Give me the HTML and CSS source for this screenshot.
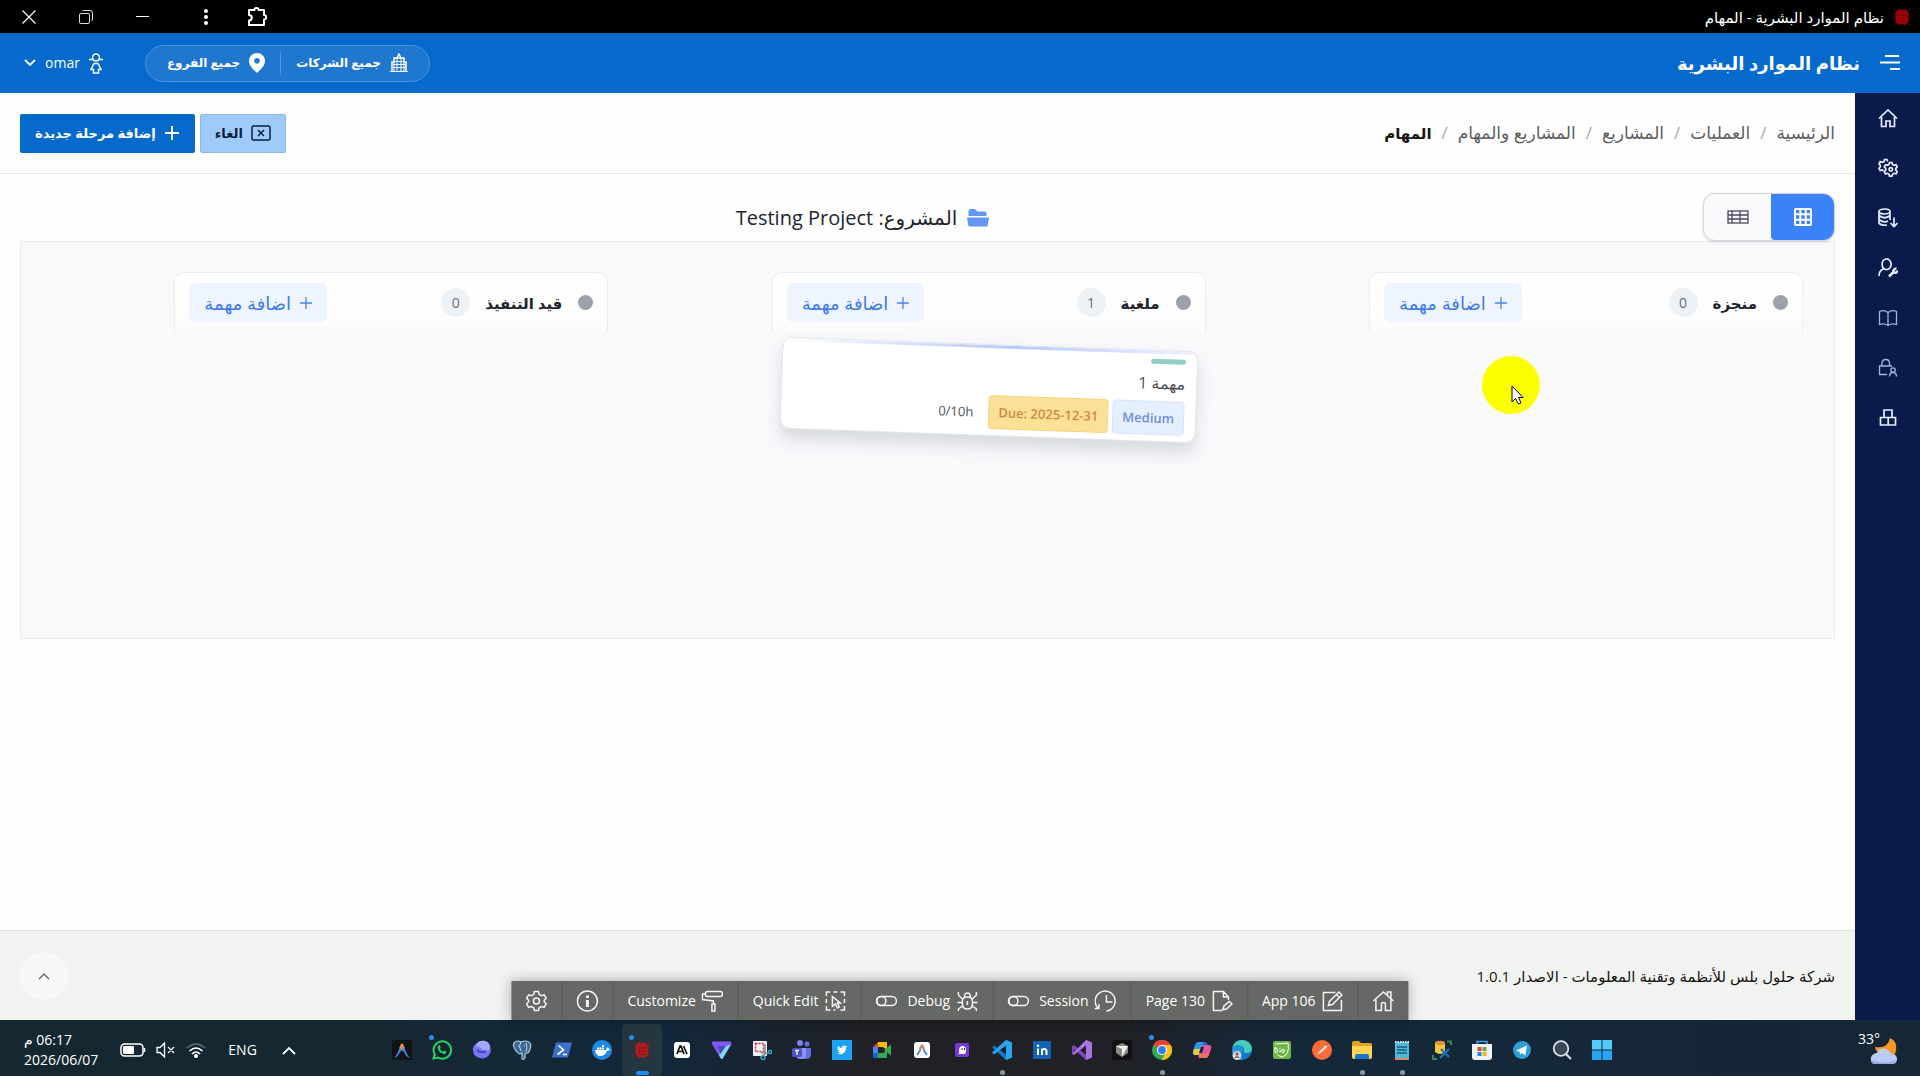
FILE: index.html
```html
<!DOCTYPE html>
<html lang="ar" dir="rtl">
<head>
    <meta charset="UTF-8">
    <meta name="viewport" content="width=device-width, initial-scale=1.0">
    <title>نظام الموارد البشرية - المهام</title>
    <link rel="stylesheet" href="styles.css">
</head>
<body>

    <!-- Window title bar -->
    <div class="titlebar">
        <div class="titlebar-name">
            <svg class="app-mark" viewBox="0 0 20 20"><path d="M5 4l2-2 3 1 3-1 2 2 2 3-1 3 1 3-2 3-2 2-3-1-3 1-3-3-1-3 1-2-1-3z" fill="#a00008"/><path d="M1 1l4 4M19 1l-4 4M1 19l4-4M19 19l-4-4M1 10h3M16 10h3M6 8h8M6 11h8M7 14h6M8 5h5" stroke="#6b0006"/></svg>
            <span>نظام الموارد البشرية - المهام</span>
        </div>
        <div class="window-controls">
            <button class="win-btn ext" aria-label="Extensions"><svg width="20" height="20" viewBox="0 0 20 20"><path d="M2 3h5.500a2 2 0 0 1 4 0H17v5a2 2 0 0 1 0 4.500V18H2v-4.500a2.500 2.500 0 0 0 0-5.500z" fill="none" stroke="#fff" stroke-width="2" stroke-linejoin="round"/></svg></button>
            <button class="win-btn more" aria-label="More"><svg width="4" height="16" viewBox="0 0 4 16" fill="#fff"><circle cx="2" cy="2" r="2"/><circle cx="2" cy="8" r="2"/><circle cx="2" cy="14" r="2"/></svg></button>
            <button class="win-btn" aria-label="Minimize"><svg width="14" height="14" viewBox="0 0 14 14"><path d="M0 6.500h13" stroke="#fff"/></svg></button>
            <button class="win-btn" aria-label="Restore"><svg width="14" height="14" viewBox="0 0 14 14" fill="none" stroke="#ddd"><rect x=".5" y="3.500" width="10" height="10" rx="1.500"/><path d="M3 1.500q.5-1 2-1h6q2.500 0 2.500 2.500v6q0 1.500-1 2"/></svg></button>
            <button class="win-btn" aria-label="Close"><svg width="14" height="14" viewBox="0 0 14 14"><path d="M.5.5l13 13M13.500.5l-13 13" stroke="#fff" stroke-width="1.200"/></svg></button>
        </div>
    </div>

    <header class="header">
        <div class="brand">
            <button class="menu-btn" aria-label="القائمة"><svg width="20" height="16" viewBox="0 0 20 16" stroke="#fff" stroke-width="2"><path d="M5 1h14M0 7.500h20M10 14h10"/></svg></button>
            <a class="brand-name" href="#">نظام الموارد البشرية</a>
        </div>
        <div class="header-tools">
            <div class="scope-pill">
                <button class="scope"><svg width="18" height="20" viewBox="0 0 18 20"><path d="M2 18V9h2V5h10v4h2v9M7 5l2-4 2 4" fill="none" stroke="#fff" stroke-width="1.500"/><path d="M0 18.500h18M7 5v13M11 5v13M4 9v9M14 9v9M4 8.500h10M3 11.500h12M3 14.500h12" stroke="#fff"/></svg><span>جميع الشركات</span></button>
                <button class="scope"><svg width="16" height="20" viewBox="0 0 16 20"><path fill="#fff" fill-rule="evenodd" d="M8 0a8 8 0 0 1 8 8c0 5-5 9-8 12C5 17 0 13 0 8a8 8 0 0 1 8-8zm0 5a2.800 2.800 0 1 0 0 5.600A2.800 2.800 0 0 0 8 5z"/></svg><span>جميع الفروع</span></button>
            </div>
            <button class="user-btn">
                <svg width="14" height="21" viewBox="0 0 14 21" fill="none" stroke="#fff" stroke-width="1.500"><circle cx="7" cy="4.500" r="3.500"/><path d="M0 6.500h4M10 6.500h4M5 10.500h4l3 6H9.500V20h-5v-3.500H2z"/></svg>
                <span>omar</span>
                <svg width="12" height="8" viewBox="0 0 12 8"><path d="M1 1l5 5 5-5" fill="none" stroke="#fff" stroke-width="1.800"/></svg>
            </button>
        </div>
    </header>

    <div class="shell">
        <nav class="rail" aria-label="القائمة الرئيسية">
            <a href="#" aria-label="الرئيسية"><svg viewBox="0 0 20 20"><path d="M1 10.500L10 2l9 8.500M3.500 9v9.500H8V13h4v5.500h4.500V9"/></svg></a>
            <a href="#" aria-label="الإعدادات"><svg viewBox="0 0 20 20"><path d="M9.500 3.500l-.5-2H6.500L6 3.500l-2 .8-1.800-.8L1 5.800l1.300 1.500v1.500L1 10.500l1.200 2 2-.5 1.300.8"/><path d="M11 6.500l.5-2H14l.5 2 1.500.8 2-.6 1.200 2.200-1.400 1.500v1.800l1.400 1.500-1.200 2.200-2-.6-1.500.9-.5 2h-2.500l-.5-2-1.500-.9-2 .6-1.200-2.200 1.400-1.500v-1.800L6.300 8.900l1.200-2.200 2 .6z"/><circle cx="12.800" cy="11.300" r="1.700"/></svg></a>
            <a href="#" aria-label="البيانات"><svg viewBox="0 0 20 20"><ellipse cx="6.500" cy="3.500" rx="5.500" ry="2.500"/><path d="M1 3.500V15q1.500 2.500 8 2.200M12 3.500V12M1 7.500q5.500 4.500 11 0M1 11.500q5 4 9 1.500M16 9.500v9M12.500 15l3.500 3.500 3.500-3.500"/></svg></a>
            <a href="#" aria-label="المستخدمون"><svg viewBox="0 0 20 20"><path d="M8 1a4.500 5.300 0 1 1 0 10.500A4.500 5.300 0 0 1 8 1zM5.500 11Q1 12.500 1 18"/><path d="M11 18.500l5-5M15.500 14.500a3 3 0 0 1 3-4M15.500 14.500a3 3 0 0 0 4.300-2" stroke-width="2.500"/></svg></a>
            <a class="dim" href="#" aria-label="الدليل"><svg viewBox="0 0 20 20"><path d="M10 4.500Q6 1.500 1.500 3.500V16.500Q6 15 10 17.500 14 15 18.500 16.500V3.500Q14 1.500 10 4.500zM10 4.500v13"/></svg></a>
            <a class="dim" href="#" aria-label="الصلاحيات"><svg viewBox="0 0 20 20"><path d="M9 16.500H1.500V8H14M4 8V5q0-3.500 3.700-3.500T11.500 5v3"/><circle cx="15" cy="12" r="2.200"/><path d="M11.500 18.500q.2-4 3.500-4t3.500 4"/></svg></a>
            <a href="#" aria-label="الوحدات"><svg viewBox="0 0 20 20"><path d="M6 2h8v7.500H6zM2.500 9.500h7.700V17H2.500zM10.200 9.500h7.300V17h-7.300z"/></svg></a>
        </nav>

        <div class="page">
            <div class="page-head">
                <nav class="breadcrumb" aria-label="مسار التنقل">
                    <a href="#">الرئيسية</a><span class="sep">/</span>
                    <a href="#">العمليات</a><span class="sep">/</span>
                    <a href="#">المشاريع</a><span class="sep">/</span>
                    <a href="#">المشاريع والمهام</a><span class="sep">/</span>
                    <h1>المهام</h1>
                </nav>
                <div class="page-actions">
                    <button class="btn btn-cancel"><svg width="20" height="16" viewBox="0 0 20 16" fill="none" stroke="#0a1f3c" stroke-width="1.500"><rect x="1" y="1" width="18" height="14" rx="1.500"/><path d="M7 5l6 6M13 5l-6 6"/></svg><span>الغاء</span></button>
                    <button class="btn btn-primary"><svg width="16" height="16" viewBox="0 0 16 16"><path d="M8 1v14M1 8h14" stroke="#fff" stroke-width="2"/></svg><span>إضافة مرحلة جديدة</span></button>
                </div>
            </div>

            <main class="content">
                <div class="board-head">
                    <div class="view-toggle">
                        <button class="active" aria-label="عرض البطاقات" aria-pressed="true"><svg width="18" height="18" viewBox="0 0 18 18" fill="none" stroke="#fff" stroke-width="2"><rect x="1" y="1" width="16" height="16" rx="1"/><path d="M1 6.300h16M1 11.700h16M6.300 1v16M11.700 1v16"/></svg></button>
                        <button aria-label="عرض الجدول" aria-pressed="false"><svg width="22" height="14" viewBox="0 0 22 14" fill="none" stroke="#4a4763" stroke-width="1.300"><rect x="1" y="1" width="20" height="12"/><path d="M1 5h20M1 9h20M5 1v12M13 1v12"/></svg></button>
                    </div>
                    <h2 class="project-title">
                        <svg width="22" height="18" viewBox="0 0 22 18" fill="#6297f3"><path d="M1.500 7V2q0-2 2-2H8l2.500 2.500h7q2 0 2 2V7z"/><path d="M0 8.500h22l-1.200 7.500q-.3 1.500-1.800 1.500H3q-1.500 0-1.800-1.500z"/></svg>
                        <span>المشروع: Testing Project</span>
                    </h2>
                </div>

                <div class="board">
                    <section class="column">
                        <div class="column-head">
                            <span class="dot"></span>
                            <h3>منجزة</h3>
                            <span class="count">0</span>
                            <button class="add-task"><svg width="12" height="12" viewBox="0 0 12 12"><path d="M6 0v12M0 6h12" stroke="#4b82ea" stroke-width="1.300"/></svg><span>اضافة مهمة</span></button>
                        </div>
                    </section>
                    <section class="column">
                        <div class="column-head">
                            <span class="dot"></span>
                            <h3>ملغية</h3>
                            <span class="count">1</span>
                            <button class="add-task"><svg width="12" height="12" viewBox="0 0 12 12"><path d="M6 0v12M0 6h12" stroke="#4b82ea" stroke-width="1.300"/></svg><span>اضافة مهمة</span></button>
                        </div>
                        <article class="task dragging">
                            <span class="task-tag"></span>
                            <h4>مهمة 1</h4>
                            <div class="task-meta">
                                <span class="badge badge-priority">Medium</span>
                                <span class="badge badge-due" dir="ltr">Due: 2025-12-31</span>
                                <span class="hours" dir="ltr">0/10h</span>
                            </div>
                        </article>
                    </section>
                    <section class="column">
                        <div class="column-head">
                            <span class="dot"></span>
                            <h3>قيد التنفيذ</h3>
                            <span class="count">0</span>
                            <button class="add-task"><svg width="12" height="12" viewBox="0 0 12 12"><path d="M6 0v12M0 6h12" stroke="#4b82ea" stroke-width="1.300"/></svg><span>اضافة مهمة</span></button>
                        </div>
                    </section>
                </div>
            </main>

            <footer class="footer">
                <span>شركة حلول بلس للأنظمة وتقنية المعلومات - الاصدار 1.0.1</span>
                <a class="to-top" href="#" aria-label="إلى الأعلى"><svg width="12" height="8" viewBox="0 0 12 8"><path d="M1 7l5-5 5 5" fill="none" stroke="#555" stroke-width="1.200"/></svg></a>
            </footer>
        </div>
    </div>

    <!-- Developer toolbar -->
    <div class="dev-bar">
        <button aria-label="Home"><svg viewBox="0 0 22 22"><path d="M1 11L11 2l10 9M3.500 9.500V20.500H9V14q0-1.500 2-1.500t2 1.500v6.500h5.500V9.500M15 5V2h3.500v6"/></svg></button>
        <button><svg viewBox="0 0 22 22"><path d="M14 2.500H2v18h18V10"/><path d="M7 15.500l1-4 9.500-9.500 3 3-9.500 9.500zM15 4.500l3 3"/></svg><span>App 106</span></button>
        <button><svg viewBox="0 0 22 22"><path d="M11 20.500H2v-19h10l5 5.500v3M12 1.500V7h5M11.500 19.500l1-3.500 5.500-4.500 2.500 2.500-5.500 5z"/></svg><span>Page 130</span></button>
        <button><svg viewBox="0 0 22 22"><path d="M3.500 18A10 10 0 1 1 12 21M12 5v7h6M0 18.500h4.500V14"/></svg><span>Session</span><svg class="switch" viewBox="0 0 22 22"><rect x="1" y="6.500" width="20" height="9" rx="4.500"/><circle cx="6" cy="11" r="4.500"/></svg></button>
        <button><svg viewBox="0 0 22 22"><path d="M6 11q0-4 5-4t5 4v3q0 5-5 5t-5-5zM8 7q0-4 3-4t3 4M11 11v4M2 2v3l4 4M20 2v3l-4 4M1 12.500h5M16 12.500h5M2 21v-2l4-3M20 21v-2l-4-3"/></svg><span>Debug</span><svg class="switch" viewBox="0 0 22 22"><rect x="1" y="6.500" width="20" height="9" rx="4.500"/><circle cx="6" cy="11" r="4.500"/></svg></button>
        <button><svg viewBox="0 0 22 22"><path d="M2 6V2h4M9 2h4M16 2h4v4M20 9v4M20 16v4h-4M2 9v4M2 16v4h4M9 20h2"/><path d="M8 6.500v10l3-2.500 2 4 2-1-2-4h3z"/></svg><span>Quick Edit</span></button>
        <button><svg viewBox="0 0 22 22"><rect x="4" y="1.500" width="17" height="5" rx="2"/><path d="M4 4H1v5.500l11 1.500v3M10.500 14h3v7h-3z"/></svg><span>Customize</span></button>
        <button aria-label="Info"><svg viewBox="0 0 22 22"><circle cx="11" cy="11" r="10"/><path d="M11 10v7M11 5.500V8" stroke-width="3"/></svg></button>
        <button aria-label="Settings"><svg viewBox="0 0 22 22"><path d="M9 1.500h4l.7 2.800 2.300 1.300 2.800-.8 2 3.500-2 2v1.500l2 2-2 3.500-2.800-.8-2.300 1.300L13 20.500H9l-.7-2.700L6 16.500l-2.800.8-2-3.500 2-2v-1.500l-2-2 2-3.500 2.800.8 2.300-1.300z"/><circle cx="11" cy="11" r="3"/></svg></button>
    </div>

    <!-- Desktop taskbar -->
    <div class="taskbar" dir="ltr">
        <div class="tray">
            <div class="clock" dir="rtl"><span>06:17 م</span><span dir="ltr">2026/06/07</span></div>
            <div class="status">
                <svg width="26" height="14" viewBox="0 0 26 14"><rect x="1" y="1" width="22" height="12" rx="3.500" fill="none" stroke="#fff" stroke-width="1.500"/><rect x="3" y="3" width="11" height="8" rx="1" fill="#fff"/><path d="M24.500 5v4" stroke="#fff" stroke-width="1.500"/></svg>
                <svg width="20" height="16" viewBox="0 0 20 16" fill="none" stroke="#fff" stroke-width="1.300"><path d="M1 5.500h3L8.500 1v14L4 10.500H1zM12 5l6 6M18 5l-6 6"/></svg>
                <svg width="20" height="15" viewBox="0 0 20 15" fill="none" stroke="#fff" stroke-width="1.500"><path d="M1 5q9-8 18 0" stroke="#60707b"/><path d="M3.500 8q6.500-6 13 0M6 11q4-4 8 0"/><circle cx="10" cy="13" r="1.300" fill="#fff"/></svg>
            </div>
            <span class="lang">ENG</span>
            <svg width="14" height="9" viewBox="0 0 14 9"><path d="M1 8l6-6 6 6" fill="none" stroke="#fff" stroke-width="1.800"/></svg>
        </div>

        <div class="apps">
            <a class="app" href="#" aria-label="Antigravity"><svg viewBox="0 0 20 20"><path d="M0 0h20v20H0z" fill="#101416"/><path d="M2 18Q6 14 8 6q2-5 4 0 2 8 6 12-4-1-6-6-2-3-4 0-2 5-6 6z" fill="#4a86e8"/><path d="M7.500 8Q10-1 12.500 8l-2.500 1z" fill="#ef8a3c"/></svg></a>
            <a class="app notice" href="#" aria-label="WhatsApp"><svg viewBox="0 0 20 20"><path d="M1.500 18.500l1.300-4.200A8.700 8.700 0 1 1 6 17.500z" fill="#15252f" stroke="#25d366" stroke-width="2"/><path d="M6.500 5.500q1-1 1.500.3l.7 1.700-1 1.300q1 2.200 3.300 3l1.200-1.300 2.300 1q-.1 2.500-2.500 2.500Q7 13 5.800 8.500 5.500 6.500 6.500 5.500z" fill="#25d366"/></svg></a>
            <a class="app" href="#" aria-label="Assistant"><svg viewBox="0 0 20 20"><path d="M5 3q3-3 8-2 4 1 5 5 2 5-1 9-4 5-9 3-6-1-7-7-1-5 4-8z" fill="#7776f0"/><path d="M5 3q3-3 8-2 4 1 5 5l-1 4q-4 2-7-1-4-3-6-2z" fill="#a5a6ff"/><path d="M5 10q4 4 9 1" stroke="#3f37b8" stroke-width="1.500" fill="none"/></svg></a>
            <a class="app" href="#" aria-label="PostgreSQL"><svg viewBox="0 0 20 20"><path d="M3 2q3-2 6 0 4-2 8 0 3 2 1 7-1 4-3 4l-2 1v4q-1 2-3 1V13q-3 2-5-1Q-1 5 3 2z" fill="#386a94" stroke="#b5c6d3" stroke-width="1.200"/><path d="M9 2Q6 6 9 11M14 3q2 4 0 9M6 6h1M12 6h1" fill="none" stroke="#c6d4de"/></svg></a>
            <a class="app" href="#" aria-label="PowerShell"><svg viewBox="0 0 20 20"><path d="M4 2.500h16L16 17.500H0z" fill="#3b6fce"/><path d="M6.500 5.500l5 4.500-6 4.500M11 14.500h4" stroke="#fff" stroke-width="1.600" fill="none"/></svg></a>
            <a class="app" href="#" aria-label="Docker"><svg viewBox="0 0 20 20"><circle cx="10" cy="10" r="10" fill="#1d8be6"/><path d="M3 10h11q1-1 1-3 2 1 2 2 1 0 1 1l-3 1q-2 5-7 5-4 0-5-6zM5 7.500h2V9.500H5zM7.500 7.500h2V9.500h-2zM10 7.500h2V9.500h-2zM10 5h2v2h-2z" fill="#fff"/></svg></a>
            <a class="app notice current" href="#" aria-label="نظام الموارد البشرية"><svg viewBox="0 0 20 20"><path d="M5 4l2-2 3 1 3-1 2 2 2 3-1 3 1 3-2 3-2 2-3-1-3 1-3-3-1-3 1-2-1-3z" fill="#ad1d22"/><path d="M1 1l4 4M19 1l-4 4M1 19l4-4M19 19l-4-4M1 10h3M16 10h3M6 8h8M6 11h8M7 14h6" stroke="#7f1519"/></svg></a>
            <a class="app" href="#" aria-label="Anthropic"><svg viewBox="0 0 20 20"><rect x="2" y="2" width="16" height="16" rx="3" fill="#fff"/><path d="M5 14l3-8h1l3 8M6 11.500h5M11.500 6l3.500 8" stroke="#111" stroke-width="1.700" fill="none"/></svg></a>
            <a class="app" href="#" aria-label="Proton VPN"><svg viewBox="0 0 20 20"><path d="M1 1.500h17q2 1 1 3L11 18q-1 2-2.500 0L0 4q-1-2 1-2.500z" fill="#8458ff"/><path d="M19 4.500L11 18q-1 2-2.500 0L7 15l7-9z" fill="#7fdbe8"/><path d="M5 6h9L8.500 14z" fill="#4c4bb0"/></svg></a>
            <a class="app" href="#" aria-label="Snipping Tool"><svg viewBox="0 0 20 20"><rect x="1" y="1" width="14" height="15" rx="1" fill="#f4f5f7"/><rect x="3.500" y="3.500" width="8" height="8" fill="none" stroke="#d5343a" stroke-width="1.500" stroke-dasharray="2 1"/><path d="M13 4v10l-2 2M9 13h8" stroke="#888" stroke-width="1.500" fill="none"/><circle cx="11" cy="17.500" r="2" fill="none" stroke="#35b4d4" stroke-width="1.300"/><circle cx="18" cy="12" r="1.600" fill="none" stroke="#35b4d4" stroke-width="1.300"/></svg></a>
            <a class="app" href="#" aria-label="Teams"><svg viewBox="0 0 20 20"><circle cx="8" cy="3" r="3" fill="#7b83eb"/><circle cx="15" cy="4" r="2.500" fill="#6670dc"/><path d="M11 8h8v6q0 5-5 5h-3z" fill="#6670dc"/><path d="M4 8h10v7q0 4-5 4t-5-4z" fill="#8d94ff"/><rect x="0" y="8" width="10" height="9" rx="1.500" fill="#4b53bc"/><path d="M3 10.500h4M5 10.500V15" stroke="#fff" stroke-width="1.300"/></svg></a>
            <a class="app" href="#" aria-label="Twitter"><svg viewBox="0 0 20 20"><path d="M0 0h20v20H0z" fill="#1da1f2"/><path d="M5 13.500q2 0 3-.9-1.500-.2-2-1.600h1Q5.300 10.300 5.500 8.500l.9.200Q5 7.300 6 6q2 2 4 2-.2-2.500 2-2.500 1 0 1.500.6l1.300-.4-.7 1.100 1-.2-1 1Q14 13 9.500 14.200 7 14.500 5 13.500z" fill="#fff"/></svg></a>
            <a class="app" href="#" aria-label="Google Meet"><svg viewBox="0 0 20 20"><path d="M1 7l5-5v5z" fill="#ea4335"/><path d="M6 2h8q1 0 1 1v7l-4-3H6z" fill="#fbbc04"/><path d="M1 7h5v6H1z" fill="#4285f4"/><path d="M1 13h5v5H2q-1 0-1-1z" fill="#1967d2"/><path d="M6 13h5l4-3v7q0 1-1 1H6zM12 10l7-5.500v11z" fill="#34a853"/></svg></a>
            <a class="app" href="#" aria-label="Antigravity IDE"><svg viewBox="0 0 20 20"><rect x="2" y="2" width="16" height="16" rx="3" fill="#fff"/><path d="M5 15q3-3 4-8 1-2 2 0 1 5 4 8" fill="none" stroke="#4a86e8" stroke-width="1.800"/><path d="M8 9q2-8 4 0" fill="none" stroke="#ef8a3c" stroke-width="1.500"/></svg></a>
            <a class="app" href="#" aria-label="Ghost"><svg viewBox="0 0 20 20"><rect x="3" y="3" width="14" height="14" rx="2" fill="#7437d8"/><path d="M6.500 14q1-1 .5-3 0-5 3.500-5t3.500 4-2 4z" fill="#fff"/><path d="M10 8v2M12.500 8v2" stroke="#333"/></svg></a>
            <a class="app running" href="#" aria-label="VS Code"><svg viewBox="0 0 20 20"><path d="M14 0l6 2.500v15L14 20 0 7.500 2 5.500l12 9z" fill="#1976c4"/><path d="M14 0l6 2.500v15L14 20V5.500L2 14.500l-2-2z" fill="#2aa5ee"/></svg></a>
            <a class="app" href="#" aria-label="LinkedIn"><svg viewBox="0 0 20 20"><rect x="1" y="1" width="18" height="18" rx="1" fill="#1463b3"/><path d="M6 8.500V15M10 15V8.500M10 11.500q0-2.500 2.300-2.500t2.200 2.500V15" stroke="#fff" stroke-width="2" fill="none"/><circle cx="6" cy="5.800" r="1.200" fill="#fff"/></svg></a>
            <a class="app" href="#" aria-label="Visual Studio"><svg viewBox="0 0 20 20"><path d="M14 0l6 2.500v15L14 20 2 9.500v5L0 14V6l2-1 12 10z" fill="#7d45b8"/><path d="M14 0l6 2.500v15L14 20V5.500L2 15l-2-1z" fill="#a974de"/></svg></a>
            <a class="app" href="#" aria-label="Cursor"><svg viewBox="0 0 20 20"><rect x="0" y="0" width="20" height="20" rx="3" fill="#111"/><path d="M4 6l6-3 6 3v7l-6 4-6-4z" fill="#888"/><path d="M4 6h12l-6 11V9z" fill="#eee"/></svg></a>
            <a class="app running notice" href="#" aria-label="Chrome"><svg viewBox="0 0 20 20"><circle cx="10" cy="10" r="10" fill="#34a853"/><path d="M10 10L1.300 5A10 10 0 0 1 18.700 5z" fill="#ea4335"/><path d="M10 20l4.500-10L10 5h8.700A10 10 0 0 1 10 20z" fill="#fbc116"/><circle cx="10" cy="10" r="5" fill="#fff"/><circle cx="10" cy="10" r="3.900" fill="#2f7cf0"/></svg></a>
            <a class="app" href="#" aria-label="Copilot"><svg viewBox="0 0 20 20"><path d="M6 2h6q2 0 1.500 2L11 13q-.5 2-3 2H3q-3 0-2-4l2-6q1-3 3-3z" fill="#2b9be8"/><path d="M2 9h9l-1 4q-1 2-3 2H3q-3 0-1-6z" fill="#e6cc3c"/><path d="M12 5h5q3 0 2 4l-2 6q-1 3-3 3H8q-2 0-1.500-2L9 7q.5-2 3-2z" fill="#e0589d"/><path d="M12 2q3 0 4 3h-4q-2 0-2 2z" fill="#2c61d8"/><path d="M7 14h10q-1 4-3 4H8q-2 0-1-4z" fill="#f07350"/><path d="M9 7h3l-2 6H7z" fill="#16263a"/></svg></a>
            <a class="app" href="#" aria-label="Edge"><svg viewBox="0 0 20 20"><circle cx="10" cy="10" r="10" fill="#1476c9"/><path d="M.5 8Q2 0 10 0t10 8q0 5-6 5-3 0-2-2 1-5-4-5.500T.5 8z" fill="#44cdb9"/><path d="M0 10q2-6 7-5 5 1 4 6-3 0-3 4 0 3 4 5Q1 21 0 10z" fill="#2196dd"/><circle cx="5" cy="15.500" r="4.500" fill="#d7dce0"/><circle cx="5" cy="14" r="1.700" fill="#8c6464"/><path d="M2 18q3-4 6 0" fill="#777"/></svg></a>
            <a class="app" href="#" aria-label="Bio"><svg viewBox="0 0 20 20"><rect x="1" y="1" width="18" height="18" rx="2" fill="#6db545"/><path d="M3 4q7 0 13-1 2 12-6 14-4-1-5-3" fill="none" stroke="#fff"/><path d="M3 7.500v5h2q1.500-1.300 0-2.500 1.200-1.500-2-2.500M8 9.500v3M8 7.500v1" fill="none" stroke="#fff"/><circle cx="11" cy="11" r="1.500" fill="none" stroke="#fff"/></svg></a>
            <a class="app" href="#" aria-label="Postman"><svg viewBox="0 0 20 20"><circle cx="10" cy="10" r="10" fill="#ff6c37"/><path d="M5 15l2-3 6-6q2-1 2 1L9 12.500z" fill="#fff"/></svg></a>
            <a class="app running" href="#" aria-label="File Explorer"><svg viewBox="0 0 20 20"><path d="M0 3q0-2 2-2h5l2 2h10q1 0 1 2v4H0z" fill="#dea21b"/><path d="M0 6h20v11q0 2-2 2H2q-2 0-2-2z" fill="#ffd354"/><path d="M3 16q0-2 2-2h10q2 0 2 2v3H3z" fill="#1b74cf"/></svg></a>
            <a class="app running" href="#" aria-label="Notepad"><svg viewBox="0 0 20 20"><rect x="3" y="2" width="14" height="17" fill="#4cb8dc"/><path d="M3 19h14" stroke="#d78d57" stroke-width="2"/><path d="M5 7h10M5 10h10M5 13h10" stroke="#1c5b77" stroke-width="1.300"/><path d="M3 2h14" stroke="#d7f2fb" stroke-width="2" stroke-dasharray="1.500 1"/></svg></a>
            <a class="app" href="#" aria-label="SQL Server"><svg viewBox="0 0 20 20"><path d="M3 3v9q5 4 10 0V3z" fill="#f4c73c"/><ellipse cx="8" cy="3" rx="5" ry="2.200" fill="#e8913b"/><path d="M15 1.500h4V5M1 15v4h4" stroke="#3f8458" stroke-width="2" fill="none"/><path d="M9 9l8 8M17 9l-9 9" stroke="#2272b8" stroke-width="2.200"/></svg></a>
            <a class="app" href="#" aria-label="Microsoft Store"><svg viewBox="0 0 20 20"><path d="M5 5V1.500h10V5" fill="none" stroke="#42a8e8" stroke-width="1.500"/><path d="M0 4h20v13q0 3-3 3H3q-3 0-3-3z" fill="#eef2f6"/><path d="M5.500 7h4v4h-4z" fill="#d84f2f"/><path d="M10.500 7h4v4h-4z" fill="#75a832"/><path d="M5.500 12h4v4h-4z" fill="#2788d0"/><path d="M10.500 12h4v4h-4z" fill="#edb526"/></svg></a>
            <a class="app" href="#" aria-label="Telegram"><svg viewBox="0 0 20 20"><circle cx="10" cy="10" r="9" fill="#2c9fd7"/><path d="M4 10.500l11-5-1.700 10-3.500-2.500-2 1.800V12z" fill="#fff"/></svg></a>
            <a class="app" href="#" aria-label="Search"><svg viewBox="0 0 20 20"><circle cx="9" cy="8.500" r="7.300" fill="#3b4a56" stroke="#dbe2e8" stroke-width="1.800"/><path d="M14 14l5 5" stroke="#dbe2e8" stroke-width="2.200"/></svg></a>
            <a class="app" href="#" aria-label="Start"><svg viewBox="0 0 20 20"><path d="M0 0h9.500v9.500H0zM10.500 0H20v9.500h-9.500z" fill="#55caff"/><path d="M0 10.500h9.500V20H0zM10.500 10.500H20V20h-9.500z" fill="#28a5f5"/></svg></a>
        </div>

        <div class="weather">
            <svg width="34" height="34" viewBox="0 0 34 34"><path d="M24 5q9 4 5 16-5 6-12 2-7-3-8-9 13 2 15-9z" fill="#f39a26"/><path d="M8 31a5.500 5.500 0 0 1 0-10q1-1 3-1 4-7 11-3 3 2 3 4 6 0 6 5t-5 5z" fill="#bccbf3"/><path d="M5 27q13 5 25 0-1 4-4 4H8q-3-1-3-4z" fill="#98aae4"/></svg>
            <span class="temp">33°</span>
        </div>
    </div>

    <!-- Mouse pointer highlight -->
    <div class="pointer" dir="ltr"><svg width="14" height="20" viewBox="0 0 14 20"><path d="M1 1v16l3.500-3.500L7.500 19l2.500-1-2.500-5.500H12z" fill="#fff" stroke="#000"/></svg></div>

</body>
</html>
```
FILE: styles.css
```css
* {
    box-sizing: border-box;
}
body {
    margin: 0;
    min-height: 100vh;
    display: flex;
    flex-direction: column;
    position: relative;
    font-family: "Open Sans", "DejaVu Sans", sans-serif;
    font-size: 14px;
    line-height: 20px;
    color: #161513;
    background: #fdfefd;
}
button {
    font: inherit;
    color: inherit;
    background: none;
    border: none;
    padding: 0;
    cursor: pointer;
}
a {
    color: inherit;
    text-decoration: none;
}
h1, h2, h3, h4 {
    margin: 0;
}
svg {
    display: block;
    flex: none;
}

/* Title bar */
.titlebar {
    height: 33px;
    padding: 0 8px 0 0;
    display: flex;
    align-items: center;
    justify-content: space-between;
    background: #000;
    color: #fff;
}
.titlebar-name {
    display: flex;
    align-items: center;
    gap: 8px;
    font-size: 15px;
}
.app-mark {
    width: 20px;
    height: 20px;
}
.window-controls {
    display: flex;
}
.win-btn {
    width: 57px;
    height: 33px;
    display: flex;
    align-items: center;
    justify-content: center;
}
.win-btn.more {
    width: 70px;
}
.win-btn.ext {
    width: 32px;
}

/* Header */
.header {
    height: 60px;
    padding: 0 20px;
    display: flex;
    align-items: center;
    justify-content: space-between;
    background: #056acb;
    color: #fff;
}
.brand {
    display: flex;
    align-items: center;
    gap: 20px;
}
.brand-name {
    font-size: 18px;
    font-weight: bold;
}
.header-tools {
    display: flex;
    align-items: center;
    gap: 38px;
}
.scope-pill {
    display: flex;
    height: 37px;
    padding: 6px;
    border: 1px solid #4a93de;
    border-radius: 19px;
    background: #2077cf;
}
.scope {
    display: flex;
    align-items: center;
    gap: 9px;
    padding: 0 15px;
    font-size: 12px;
    font-weight: bold;
}
.scope + .scope {
    border-right: 1px solid #4a93de;
}
.user-btn {
    display: flex;
    align-items: center;
    gap: 9px;
    padding: 0 4px;
}

/* Layout */
.shell {
    flex: 1;
    display: flex;
}
.rail {
    width: 65px;
    display: flex;
    flex-direction: column;
    background: #0a1b4b;
}
.rail a {
    height: 50px;
    display: flex;
    align-items: center;
    justify-content: center;
}
.rail svg {
    width: 20px;
    height: 20px;
    fill: none;
    stroke: #e6edff;
    stroke-width: 1.7;
}
.rail .dim svg {
    stroke: #a7b3dc;
    stroke-width: 1.3;
}
.page {
    flex: 1;
    min-width: 0;
    display: flex;
    flex-direction: column;
}
.page-head {
    height: 81px;
    padding: 0 20px;
    display: flex;
    align-items: center;
    justify-content: space-between;
    border-bottom: 1px solid #e6e7e8;
}
.breadcrumb {
    display: flex;
    align-items: center;
    gap: 10px;
    font-size: 17px;
    color: #5d5d5d;
}
.breadcrumb .sep {
    color: #aaa;
}
.breadcrumb h1 {
    font-size: 15px;
    color: #161513;
}
.page-actions {
    display: flex;
    gap: 5px;
}
.btn {
    height: 39px;
    padding: 0 14px;
    display: flex;
    align-items: center;
    gap: 8px;
    border-radius: 2px;
    font-size: 13px;
    font-weight: bold;
}
.btn-cancel {
    border: 1px solid #88b8e8;
    background: #9fcbfb;
    color: #0a1f3c;
}
.btn-primary {
    padding: 0 15px;
    background: #056acb;
    color: #fff;
}

/* Board */
.content {
    flex: 1;
    padding: 19px 20px 0;
}
.board-head {
    display: grid;
    grid-template-columns: 1fr auto 1fr;
    align-items: center;
}
.view-toggle {
    justify-self: start;
    display: flex;
    height: 48px;
    border: 1px solid #d3d6da;
    border-radius: 12px;
    overflow: hidden;
    background: #f9fafb;
    box-shadow: 0 1px 3px rgba(0, 0, 0, 0.15);
}
.view-toggle button {
    width: 67px;
    display: flex;
    align-items: center;
    justify-content: center;
}
.view-toggle .active {
    width: 63px;
    background: #3b82f6;
    border-radius: 0 0 4px 4px;
}
.project-title {
    grid-column: 2;
    display: flex;
    align-items: center;
    gap: 10px;
    margin-right: 130px;
    padding-top: 2px;
    font-size: 20px;
    font-weight: 500;
    color: #22252b;
}
.board {
    min-height: 398px;
    padding: 30px 31px;
    display: grid;
    grid-template-columns: repeat(3, 1fr);
    gap: 41px;
    background: #f9f9fc;
    border: 1px solid #ebebee;
}
.column {
    max-width: 434px;
}
.column-head {
    height: 60px;
    padding: 0 14px;
    display: flex;
    align-items: center;
    background: linear-gradient(#fff, #fdfdfe 80%, #fafafc);
    border: 1px solid #ececf0;
    border-bottom: none;
    border-radius: 10px 10px 0 0;
}
.dot {
    width: 15px;
    height: 15px;
    border-radius: 50%;
    background: #9ca0a9;
}
.column-head h3 {
    margin-right: 16px;
    font-size: 15px;
    color: #20242c;
}
.count {
    width: 29px;
    height: 29px;
    margin-right: 15px;
    border-radius: 50%;
    background: #edf2f7;
    color: #666f7c;
    line-height: 29px;
    text-align: center;
}
.add-task {
    height: 39px;
    margin-right: auto;
    padding: 0 15px;
    display: flex;
    align-items: center;
    gap: 9px;
    border-radius: 6px;
    background: #eff5fe;
    color: #3f7aea;
    font-size: 18px;
    font-weight: 500;
}
.task {
    margin: 12px 9px 0;
    padding: 8px 11px 6px;
    background: #fff;
    border: 1px solid #dfe6ec;
    border-radius: 10px;
    overflow: hidden;
    position: relative;
}
.task::before {
    content: "";
    position: absolute;
    top: 0;
    left: 0;
    right: 0;
    height: 3px;
    background: linear-gradient(90deg, #fff, #b8c7fa 55%, #eef1fe);
}
.dragging {
    transform: rotate(2deg);
    box-shadow: 0 10px 16px rgba(60, 80, 90, 0.18);
}
.task-tag {
    display: block;
    width: 35px;
    height: 5px;
    border-radius: 3px;
    background: #92cdc5;
}
.task h4 {
    margin-top: 9px;
    font-size: 16px;
    font-weight: normal;
    color: #4e5257;
}
.task-meta {
    display: flex;
    align-items: center;
    gap: 4px;
    margin-top: 8px;
    font-size: 13px;
    font-weight: 600;
}
.badge {
    height: 34px;
    padding: 0 9px;
    border-radius: 4px;
    line-height: 32px;
}
.badge-priority {
    background: #e6effd;
    border: 1px solid #d6e4fb;
    color: #6c8ee0;
}
.badge-due {
    background: #fbe097;
    border: 1px solid #f5d47c;
    color: #cd8b43;
}
.hours {
    margin-right: 11px;
    font-weight: normal;
    color: #4e5257;
}

/* Footer */
.footer {
    height: 90px;
    padding: 0 20px;
    display: flex;
    align-items: center;
    justify-content: space-between;
    background: #f1f3f0;
    border-top: 1px solid #e0e2e0;
    font-size: 15px;
}
.to-top {
    width: 48px;
    height: 48px;
    display: flex;
    align-items: center;
    justify-content: center;
    border-radius: 50%;
    background: #f8f9f7;
}

/* Developer toolbar, floats over the footer */
.dev-bar {
    position: absolute;
    bottom: 56px;
    left: 50%;
    transform: translateX(-50%);
    height: 39px;
    display: flex;
    background: #666865;
    color: #fff;
    white-space: nowrap;
    box-shadow: 0 0 12px rgba(0, 0, 0, 0.3);
}
.dev-bar button {
    padding: 0 14px;
    display: flex;
    align-items: center;
    gap: 6px;
}
.dev-bar button + button {
    border-right: 1px solid #595b58;
}
.dev-bar svg {
    width: 22px;
    height: 22px;
    fill: none;
    stroke: #f3f4f3;
    stroke-width: 1.5;
}
.dev-bar .switch {
    margin-right: 4px;
}

/* Taskbar */
.taskbar {
    height: 56px;
    display: grid;
    grid-template-columns: 1fr auto 1fr;
    align-items: center;
    padding: 4px 20px 0 24px;
    background: linear-gradient(90deg, #152832 20%, #13273a 35%, #202126 45%, #202126 58%, #14283a 68%, #152635);
    color: #fff;
}
.tray {
    display: flex;
    align-items: center;
    gap: 22px;
}
.clock {
    display: flex;
    flex-direction: column;
    align-items: flex-end;
}
.status {
    display: flex;
    align-items: center;
    gap: 10px;
}
.lang {
    min-width: 32px;
}
.apps {
    display: flex;
    margin-left: 80px;
}
.app {
    position: relative;
    width: 40px;
    height: 52px;
    display: flex;
    align-items: center;
    justify-content: center;
}
.app svg {
    width: 20px;
    height: 20px;
}
.current {
    background: #243740;
    border-radius: 4px;
}
.running::after,
.current::after {
    content: "";
    position: absolute;
    bottom: 1px;
    width: 5px;
    height: 5px;
    border-radius: 3px;
    background: #8f989f;
}
.current::after {
    width: 13px;
    height: 4px;
    background: #1e90f5;
}
.notice::before {
    content: "";
    position: absolute;
    top: 11px;
    left: 7px;
    width: 5px;
    height: 5px;
    border-radius: 50%;
    background: #2a8fe0;
}
.weather {
    justify-self: end;
    position: relative;
    padding-left: 8px;
}
.temp {
    position: absolute;
    top: -4px;
    left: 0;
}

.pointer {
    position: absolute;
    top: 356px;
    left: 1482px;
    width: 58px;
    height: 58px;
    padding: 29px 0 0 29px;
    border-radius: 50%;
    background: #fbff00;
}
```
